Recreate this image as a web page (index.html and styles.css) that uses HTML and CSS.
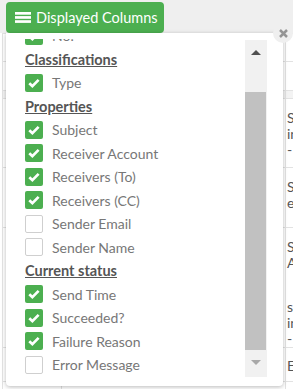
FILE: index.html
```html
<!DOCTYPE html>
<html>
<head>
<meta charset="utf-8">
<link rel="stylesheet" href="styles.css">
</head>
<body>
<div class="page">
  <div class="toolbar"></div>
  <table class="grid">
    <colgroup><col class="c1"><col class="c2"><col class="c3"></colgroup>
    <tr class="r1"><td></td><td></td><td></td></tr>
    <tr class="r2"><td></td><td></td><td></td></tr>
    <tr class="r3"><td></td><td></td><td></td></tr>
    <tr class="r4"><td></td><td></td><td><div class="cell">Sa<br>in<br>-</div></td></tr>
    <tr class="r5"><td></td><td></td><td><div class="cell">Sa<br>e</div></td></tr>
    <tr class="r6"><td></td><td></td><td><div class="cell">Sa<br>A</div><div class="cell cell2">sa<br>in<br>-</div></td></tr>
    <tr class="r7"><td></td><td></td><td><div class="cell cell3">E</div></td></tr>
    <tr class="r8"><td><div class="cell cell4">b</div></td><td><div class="cell cell5">Email Verification</div></td><td><div class="cell cell3">F</div></td></tr>
  </table>
</div>

<div class="dropdown">
  <button class="toggle">
    <svg class="burger" width="16" height="11" viewBox="0 0 16 11"><rect x="0" y="0" width="16" height="2.7" fill="#fff"/><rect x="0" y="4.1" width="16" height="2.7" fill="#fff"/><rect x="0" y="8.2" width="16" height="2.7" fill="#fff"/></svg>
    <span>Displayed Columns</span>
  </button>
  <div class="panel">
    <div class="viewport">
      <ul class="list">
        <li class="row"><span class="box on"><svg width="18" height="18" viewBox="0 0 18 18"><path d="M4.3 9.2 L7.4 12.2 L13.6 5.9" fill="none" stroke="#fff" stroke-width="2.7"/></svg></span>No.</li>
        <li class="row head">Classifications</li>
        <li class="row"><span class="box on"><svg width="18" height="18" viewBox="0 0 18 18"><path d="M4.3 9.2 L7.4 12.2 L13.6 5.9" fill="none" stroke="#fff" stroke-width="2.7"/></svg></span>Type</li>
        <li class="row head">Properties</li>
        <li class="row"><span class="box on"><svg width="18" height="18" viewBox="0 0 18 18"><path d="M4.3 9.2 L7.4 12.2 L13.6 5.9" fill="none" stroke="#fff" stroke-width="2.7"/></svg></span>Subject</li>
        <li class="row"><span class="box on"><svg width="18" height="18" viewBox="0 0 18 18"><path d="M4.3 9.2 L7.4 12.2 L13.6 5.9" fill="none" stroke="#fff" stroke-width="2.7"/></svg></span>Receiver Account</li>
        <li class="row"><span class="box on"><svg width="18" height="18" viewBox="0 0 18 18"><path d="M4.3 9.2 L7.4 12.2 L13.6 5.9" fill="none" stroke="#fff" stroke-width="2.7"/></svg></span>Receivers (To)</li>
        <li class="row"><span class="box on"><svg width="18" height="18" viewBox="0 0 18 18"><path d="M4.3 9.2 L7.4 12.2 L13.6 5.9" fill="none" stroke="#fff" stroke-width="2.7"/></svg></span>Receivers (CC)</li>
        <li class="row"><span class="box off"></span>Sender Email</li>
        <li class="row"><span class="box off"></span>Sender Name</li>
        <li class="row head">Current status</li>
        <li class="row"><span class="box on"><svg width="18" height="18" viewBox="0 0 18 18"><path d="M4.3 9.2 L7.4 12.2 L13.6 5.9" fill="none" stroke="#fff" stroke-width="2.7"/></svg></span>Send Time</li>
        <li class="row"><span class="box on"><svg width="18" height="18" viewBox="0 0 18 18"><path d="M4.3 9.2 L7.4 12.2 L13.6 5.9" fill="none" stroke="#fff" stroke-width="2.7"/></svg></span>Succeeded?</li>
        <li class="row"><span class="box on"><svg width="18" height="18" viewBox="0 0 18 18"><path d="M4.3 9.2 L7.4 12.2 L13.6 5.9" fill="none" stroke="#fff" stroke-width="2.7"/></svg></span>Failure Reason</li>
        <li class="row"><span class="box off"></span>Error Message</li>
      </ul>
    </div>
    <div class="scrollbar">
      <span class="arrow-up"></span>
      <span class="thumb"></span>
      <span class="arrow-down"></span>
    </div>
    <span class="close"><svg width="9" height="9" viewBox="0 0 9 9"><path d="M1 1 L8 8 M8 1 L1 8" stroke="#959595" stroke-width="2.5" stroke-linecap="butt"/></svg></span>
  </div>
</div>
</body>
</html>
```
FILE: styles.css
```css
html, body {
  margin: 0;
  padding: 0;
}
body {
  width: 293px;
  height: 389px;
  overflow: hidden;
  position: relative;
  background: #fff;
  font-family: Lato, "Open Sans", sans-serif;
}
.page {
  width: 293px;
  height: 389px;
  overflow: hidden;
}
.toolbar {
  height: 33px;
  background: #efefef;
}
.grid {
  border-collapse: collapse;
  table-layout: fixed;
  width: 291px;
  margin-left: 2px;
  font-size: 14px;
  color: #555;
}
.c1 { width: 59px; }
.c2 { width: 224px; }
.c3 { width: 8px; }
.grid td {
  border: 1px solid #e2e2e2;
  border-right: 0;
  padding: 0;
  vertical-align: top;
  overflow: hidden;
  white-space: nowrap;
}
.r1 { height: 28px; }
.r2 { height: 29px; }
.r3 { height: 8px; }
.r3 td { background: #f3f3f3; }
.r4 { height: 69px; }
.r5 { height: 60px; }
.r6 { height: 111px; }
.r7 { height: 34px; }
.r8 { height: 30px; }
.cell {
  padding: 11px 0 0 1px;
  line-height: 16px;
}
.cell2 { padding-top: 28px; }
.cell3 { padding-top: 10px; }
.cell4 { padding: 6px 0 0 26px; color: #777; }
.cell5 { padding: 6px 0 0 28px; color: #777; }

.dropdown {
  position: absolute;
  left: 6px;
  top: 2px;
}
.toggle {
  display: flex;
  align-items: center;
  gap: 5px;
  width: 158px;
  height: 31px;
  box-sizing: border-box;
  padding: 0 0 1px 9px;
  border: 0;
  border-radius: 4px;
  background: #4caf50;
  color: #fff;
  font-family: Lato, "Open Sans", sans-serif;
  font-size: 14.5px;
}
.burger { flex: none; }
.panel {
  position: relative;
  display: flex;
  width: 277px;
  height: 353px;
  box-sizing: border-box;
  padding: 6px 16px 4px 19px;
  background: #fff;
  border-radius: 0 0 4px 4px;
  box-shadow: 0 1px 4px rgba(0, 0, 0, 0.28);
}
.viewport {
  flex: 1;
  overflow: hidden;
}
.list {
  margin: -15px 0 0;
  padding: 0;
  list-style: none;
}
.row {
  display: flex;
  align-items: center;
  gap: 9px;
  height: 23.5px;
  font-size: 14px;
  color: #777;
  white-space: nowrap;
}
.head {
  font-size: 14.5px;
  font-weight: 700;
  color: #555;
  text-decoration: underline;
}
.box {
  flex: none;
  width: 18px;
  height: 18px;
  box-sizing: border-box;
  border-radius: 2px;
}
.box svg { display: block; }
.box.on { background: #4caf50; }
.box.off {
  background: #fff;
  border: 1px solid #cfcfcf;
}
.scrollbar {
  flex: none;
  width: 22px;
  margin: 1px 0 5px;
  background: #f1f1f1;
  display: flex;
  flex-direction: column;
  align-items: center;
}
.arrow-up {
  margin-top: 10px;
  width: 0;
  height: 0;
  border-left: 5.5px solid transparent;
  border-right: 5.5px solid transparent;
  border-bottom: 5.5px solid #505050;
}
.thumb {
  align-self: flex-start;
  width: 21px;
  height: 258px;
  margin-top: 37px;
  background: #c1c1c1;
}
.arrow-down {
  margin-top: 10px;
  width: 0;
  height: 0;
  border-left: 5.5px solid transparent;
  border-right: 5.5px solid transparent;
  border-top: 5.5px solid #a8a8a8;
}
.close {
  position: absolute;
  right: -10px;
  top: -10px;
  width: 20px;
  height: 20px;
  border-radius: 50%;
  background: #efefef;
  display: flex;
  align-items: center;
  justify-content: center;
}
.close svg { display: block; }
```
